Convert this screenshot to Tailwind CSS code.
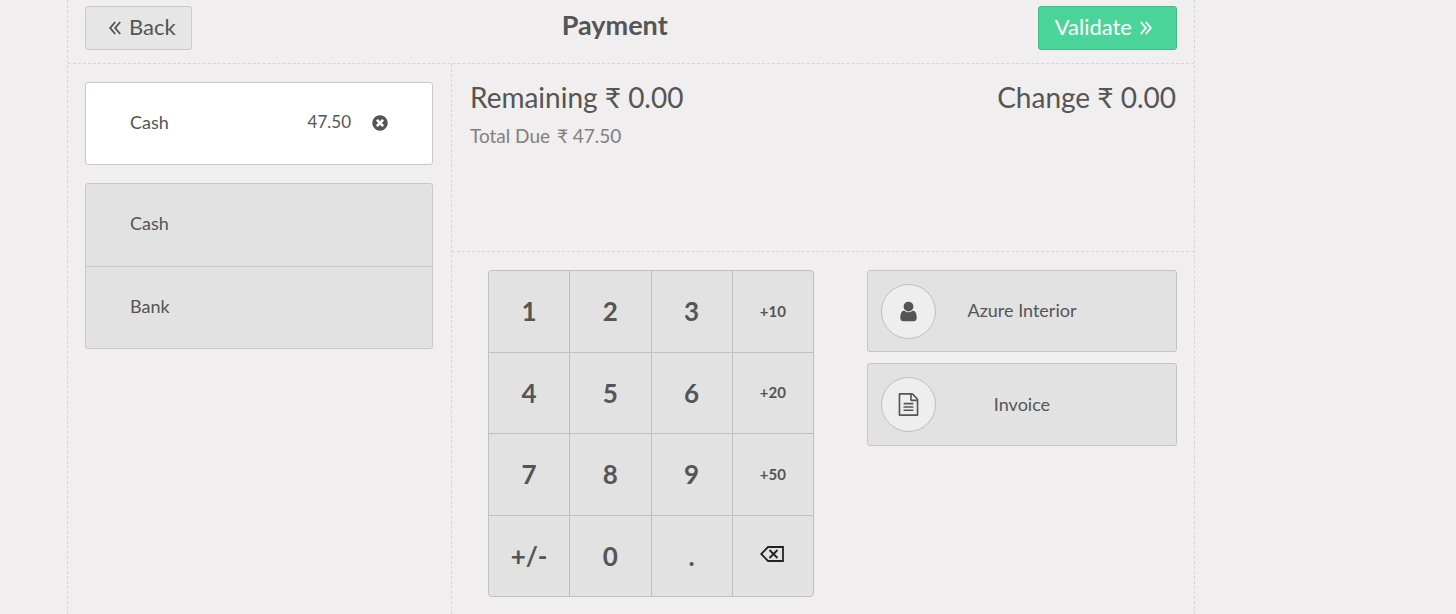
<!DOCTYPE html>
<html lang="en">
<head>
<meta charset="utf-8">
<meta name="viewport" content="width=device-width, initial-scale=1">
<title>Payment</title>
<script src="https://cdn.jsdelivr.net/npm/@tailwindcss/browser@4"></script>
</head>
<body class="bg-[#f0eeee] font-['Lato','Noto_Sans',sans-serif] text-lg text-[#555555]">
<div class="ml-[67px] flex min-h-screen max-w-[1128px] flex-col border-x border-dashed border-[#d6d4d4]">
  <header class="flex h-16 items-start justify-between border-b border-dashed border-[#d6d4d4] px-[17px] pt-1.5">
    <button type="button" class="flex h-11 items-center gap-2 rounded-[3px] border border-[#cacaca] bg-[#e6e6e6] pr-[15px] pl-[23px] text-[22px]">
      <svg class="h-3.5 w-3" viewBox="0 0 12 14" fill="none" stroke="currentColor" stroke-width="1.9" aria-hidden="true"><path d="M6.2 1 1.2 7l5 6M11.2 1 6.2 7l5 6"/></svg>
      <span class="pb-0.5">Back</span>
    </button>
    <h1 class="text-[27px] leading-[38px] font-bold">Payment</h1>
    <button type="button" class="flex h-11 items-center gap-2 rounded-[3px] border border-[#43b983] bg-[#4bd49a] pr-6 pl-4 text-[22px] text-white">
      <span class="pb-0.5">Validate</span>
      <svg class="h-3.5 w-3" viewBox="0 0 12 14" fill="none" stroke="currentColor" stroke-width="1.9" aria-hidden="true"><path d="M.8 1l5 6-5 6M5.8 1l5 6-5 6"/></svg>
    </button>
  </header>

  <div class="flex grow">
    <aside class="w-[384px] shrink-0 border-r border-dashed border-[#d6d4d4] pt-[18px] pr-[18px] pl-[17px]">
      <div class="mb-[18px] flex h-[83px] items-center rounded-[3px] border border-[#c8c8c8] bg-white pr-[43px] pl-11">
        <span class="grow pb-1">Cash</span>
        <span class="pb-0.5 text-[17px]">47.50</span>
        <button type="button" aria-label="Remove payment line" class="ml-5 pb-0.5">
          <svg class="size-[18px]" viewBox="0 0 1792 1792" fill="currentColor" aria-hidden="true"><path d="M1277 1122q0-26-19-45l-181-181 181-181q19-19 19-45 0-27-19-46l-90-90q-19-19-46-19-26 0-45 19l-181 181-181-181q-19-19-45-19-27 0-46 19l-90 90q-19 19-19 46 0 26 19 45l181 181-181 181q-19 19-19 45 0 27 19 46l90 90q19 19 46 19 26 0 45-19l181-181 181 181q19 19 45 19 27 0 46-19l90-90q19-19 19-46zm387-226q0 209-103 385.5t-279.5 279.5-385.5 103-385.5-103-279.5-279.5-103-385.5 103-385.5 279.5-279.5 385.5-103 385.5 103 279.5 279.5 103 385.5z"/></svg>
        </button>
      </div>
      <div class="divide-y divide-[#c8c8c8] rounded-[3px] border border-[#c8c8c8] bg-[#e2e2e2]">
        <button type="button" class="flex h-[83px] w-full items-center px-11 pb-1">Cash</button>
        <button type="button" class="flex h-[81px] w-full items-center px-11 pb-1">Bank</button>
      </div>
    </aside>

    <main class="grow">
      <section class="h-[188px] border-b border-dashed border-[#d6d4d4] px-[18px] pt-3">
        <div class="flex justify-between text-[28px] leading-[42px]">
          <p>Remaining <span>₹ 0.00</span></p>
          <p>Change <span>₹ 0.00</span></p>
        </div>
        <p class="text-[19px] leading-9 text-[#808080]">Total Due <span class="ml-0.5">₹ 47.50</span></p>
      </section>

      <section class="flex items-start gap-[53px] pt-[18px] pr-[17px] pl-9">
        <div class="grid h-[327px] w-[326px] shrink-0 grid-cols-4 grid-rows-4 gap-px overflow-hidden rounded-[4px] border border-[#bfbfbf] bg-[#bfbfbf] text-[26px] font-bold *:bg-[#e2e2e2]">
          <button type="button">1</button>
          <button type="button">2</button>
          <button type="button">3</button>
          <button type="button" class="text-[15px]">+10</button>
          <button type="button">4</button>
          <button type="button">5</button>
          <button type="button">6</button>
          <button type="button" class="text-[15px]">+20</button>
          <button type="button">7</button>
          <button type="button">8</button>
          <button type="button">9</button>
          <button type="button" class="text-[15px]">+50</button>
          <button type="button">+/-</button>
          <button type="button">0</button>
          <button type="button">.</button>
          <button type="button" aria-label="Backspace" class="flex items-center justify-center pr-0.5 pb-1">
            <svg class="h-4 w-6" viewBox="0 0 24 16" fill="none" stroke="#222222" stroke-width="1.8" aria-hidden="true"><path d="M8 1h15v14H8L1.2 8zM9.5 4l8 8M17.5 4l-8 8"/></svg>
          </button>
        </div>

        <div class="flex grow flex-col gap-[11px]">
          <button type="button" class="grid h-[82px] grid-cols-[55px_1fr_55px] items-center rounded-[3px] border border-[#c4c4c4] bg-[#e2e2e2] px-[13px]">
            <span class="flex size-[55px] items-center justify-center rounded-full border border-[#bfbfbf] bg-[#eeeeee] pr-px">
              <svg class="size-[23px]" viewBox="0 0 1792 1792" fill="currentColor" aria-hidden="true"><path d="M1536 1399q0 109-62.5 187t-150.5 78h-854q-88 0-150.5-78t-62.5-187q0-85 8.5-160.5t31.5-152 58.5-131 94-89 134.5-34.5q131 128 313 128t313-128q76 0 134.5 34.5t94 89 58.5 131 31.5 152 8.5 160.5zm-256-887q0 159-112.5 271.5t-271.5 112.5-271.5-112.5-112.5-271.5 112.5-271.5 271.5-112.5 271.5 112.5 112.5 271.5z"/></svg>
            </span>
            <span class="pb-0.5">Azure Interior</span>
          </button>
          <button type="button" class="grid h-[83px] grid-cols-[55px_1fr_55px] items-center rounded-[3px] border border-[#c4c4c4] bg-[#e2e2e2] px-[13px]">
            <span class="flex size-[55px] items-center justify-center rounded-full border border-[#bfbfbf] bg-[#eeeeee] pr-px">
              <svg class="size-[23px]" viewBox="0 0 1792 1792" fill="currentColor" aria-hidden="true"><path d="M1596 380q28 28 48 76t20 88v1152q0 40-28 68t-68 28h-1344q-40 0-68-28t-28-68v-1600q0-40 28-68t68-28h896q40 0 88 20t76 48zm-444-244v376h376q-10-29-22-41l-313-313q-12-12-41-22zm384 1528v-1024h-416q-40 0-68-28t-28-68v-416h-768v1536h1280zm-1024-864q0-14 9-23t23-9h704q14 0 23 9t9 23v64q0 14-9 23t-23 9h-704q-14 0-23-9t-9-23v-64zm736 224q14 0 23 9t9 23v64q0 14-9 23t-23 9h-704q-14 0-23-9t-9-23v-64q0-14 9-23t23-9h704zm0 256q14 0 23 9t9 23v64q0 14-9 23t-23 9h-704q-14 0-23-9t-9-23v-64q0-14 9-23t23-9h704z"/></svg>
            </span>
            <span class="pb-0.5">Invoice</span>
          </button>
        </div>
      </section>
    </main>
  </div>
</div>
</body>
</html>
